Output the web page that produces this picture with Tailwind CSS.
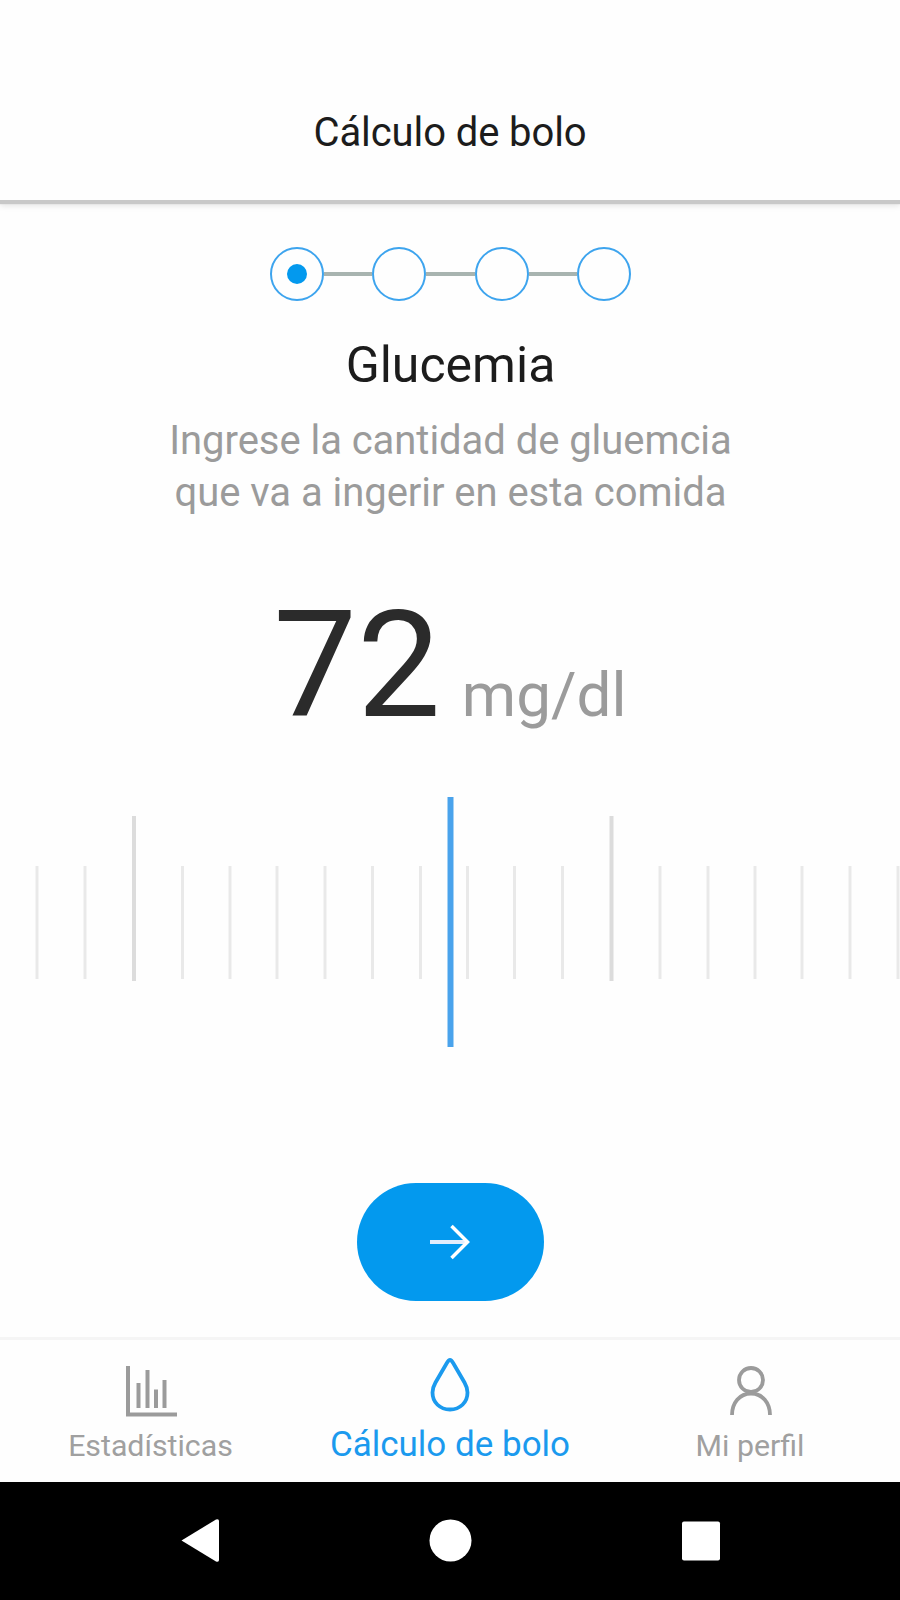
<!DOCTYPE html>
<html lang="es">
<head>
    <meta charset="UTF-8">
    <meta name="viewport" content="width=device-width, initial-scale=1.0">
    <title>Cálculo de bolo</title>
    <script src="https://cdn.jsdelivr.net/npm/@tailwindcss/browser@4"></script>
</head>
<body class="bg-[#fefefe] font-['Roboto',sans-serif] text-[#1c1c1c]">
    <div class="w-[900px] h-[1600px] flex flex-col overflow-hidden">
        <header class="h-[200px] shrink-0 pt-[103px] bg-[#fefefe] text-center shadow-[0_4px_1px_#c8c8c8,0_6px_6px_rgba(0,0,0,0.1)]">
            <h1 class="text-[40px] leading-[60px] tracking-[-0.1px]">Cálculo de bolo</h1>
        </header>

        <main class="h-[1137px] shrink-0 pt-[47px] pl-px flex flex-col items-center">
            <!-- Steps -->
            <div class="flex items-center">
                <div class="size-[54px] rounded-full border-[2.5px] border-[#3da4ee] flex items-center justify-center">
                    <div class="size-5 rounded-full bg-[#0399ee]"></div>
                </div>
                <div class="w-[48.5px] h-1 bg-[#a8b4b0]"></div>
                <div class="size-[54px] rounded-full border-[2.5px] border-[#3da4ee]"></div>
                <div class="w-[48.5px] h-1 bg-[#a8b4b0]"></div>
                <div class="size-[54px] rounded-full border-[2.5px] border-[#3da4ee]"></div>
                <div class="w-[48.5px] h-1 bg-[#a8b4b0]"></div>
                <div class="size-[54px] rounded-full border-[2.5px] border-[#3da4ee]"></div>
            </div>

            <h2 class="mt-[34px] text-[50px] leading-[60px]">Glucemia</h2>
            <p class="mt-[19.5px] text-[40px] leading-[52.5px] tracking-[-0.05px] text-center text-[#9b9b9b]">
                Ingrese la cantidad de gluemcia<br>que va a ingerir en esta comida
            </p>

            <div class="mt-[70.5px] -ml-px h-[150px] flex items-baseline gap-[21px] leading-[150px]">
                <span class="text-[149px] text-[#2b2b2b]">72</span>
                <span class="text-[62px] text-[#9b9b9b]">mg/dl</span>
            </div>

            <!-- Ruler -->
            <svg class="mt-[57px] -ml-px w-[900px] h-[250px] shrink-0" viewBox="0 0 900 250" fill="none">
                <path stroke="#e9e9e9" stroke-width="3" d="M37 69v113M85 69v113M182.500 69v113M230 69v113M277 69v113M325 69v113M372.500 69v113M420.500 69v113M467.500 69v113M514.500 69v113M562.500 69v113M660 69v113M708 69v113M755 69v113M802 69v113M850 69v113M898 69v113" />
                <path stroke="#dcdcdc" stroke-width="4" d="M134 19v165M611.500 19v165" />
                <path stroke="#4aa3ec" stroke-width="6" d="M450.500 0v250" />
            </svg>

            <button class="mt-[136px] -ml-px w-[187px] h-[118px] shrink-0 rounded-full bg-[#0399ee] flex items-center justify-center">
                <svg class="w-10 h-9" viewBox="0 0 40 36" fill="none" stroke="#fff" stroke-width="3.500">
                    <path stroke="#e3edfc" stroke-width="4" d="M0 18h36" />
                    <path d="M21.500 2l16 16l-16 16" />
                </svg>
            </button>
        </main>

        <nav class="h-[145px] shrink-0 border-t-[3px] border-[#f5f5f5] flex text-[30.3px] leading-9 text-[#a0a0a0]">
            <a class="w-[300px] flex flex-col items-center pt-[25px]">
                <svg class="w-[52px] h-[52px] ml-[2px]" viewBox="0 0 52 52" fill="none" stroke="#9b9b9b" stroke-width="4">
                    <path d="M3 1v48.500h49M13.500 18v25M22.500 5v38M31 24.500v18.500M39.500 15v28" />
                </svg>
                <span class="mt-[11px] ml-px">Estadísticas</span>
            </a>
            <a class="w-[300px] flex flex-col items-center pt-[17px] text-[#1b9aee]">
                <svg class="w-[42px] h-[56px]" viewBox="0 0 42 56" fill="none" stroke="currentColor" stroke-width="3.800" stroke-linejoin="round">
                    <path d="M21 3C19.500 3 18.700 4.500 18 5.800L6.500 25.500C4.500 29 3.500 32 3.500 35.500C3.500 45.500 11 52.500 21 52.500S38.500 45.500 38.500 35.500C38.500 32 37.500 29 35.500 25.500L24 5.800C23.300 4.500 22.500 3 21 3Z" />
                </svg>
                <span class="mt-[14px] text-[35px]">Cálculo de bolo</span>
            </a>
            <a class="w-[300px] flex flex-col items-center pt-[25px]">
                <svg class="w-[44px] h-[52px] ml-[2px]" viewBox="0 0 44 52" fill="none" stroke="#9b9b9b" stroke-width="3.800">
                    <circle cx="22" cy="15" r="12" />
                    <path d="M3 50C3 38 10.500 28.500 22 28.500S41 38 41 50" />
                </svg>
                <span class="mt-[11px]">Mi perfil</span>
            </a>
        </nav>

        <footer class="h-[118px] shrink-0 bg-black">
            <svg class="w-[900px] h-[118px]" viewBox="0 0 900 118" fill="#fff">
                <path d="M181.500 58.500L216 37.500Q219 36.500 219 39V78Q219 80.500 216 79.500Z" />
                <circle cx="450.500" cy="58.500" r="21" />
                <rect x="682" y="39.500" width="38" height="39" rx="2" />
            </svg>
        </footer>
    </div>
</body>
</html>
